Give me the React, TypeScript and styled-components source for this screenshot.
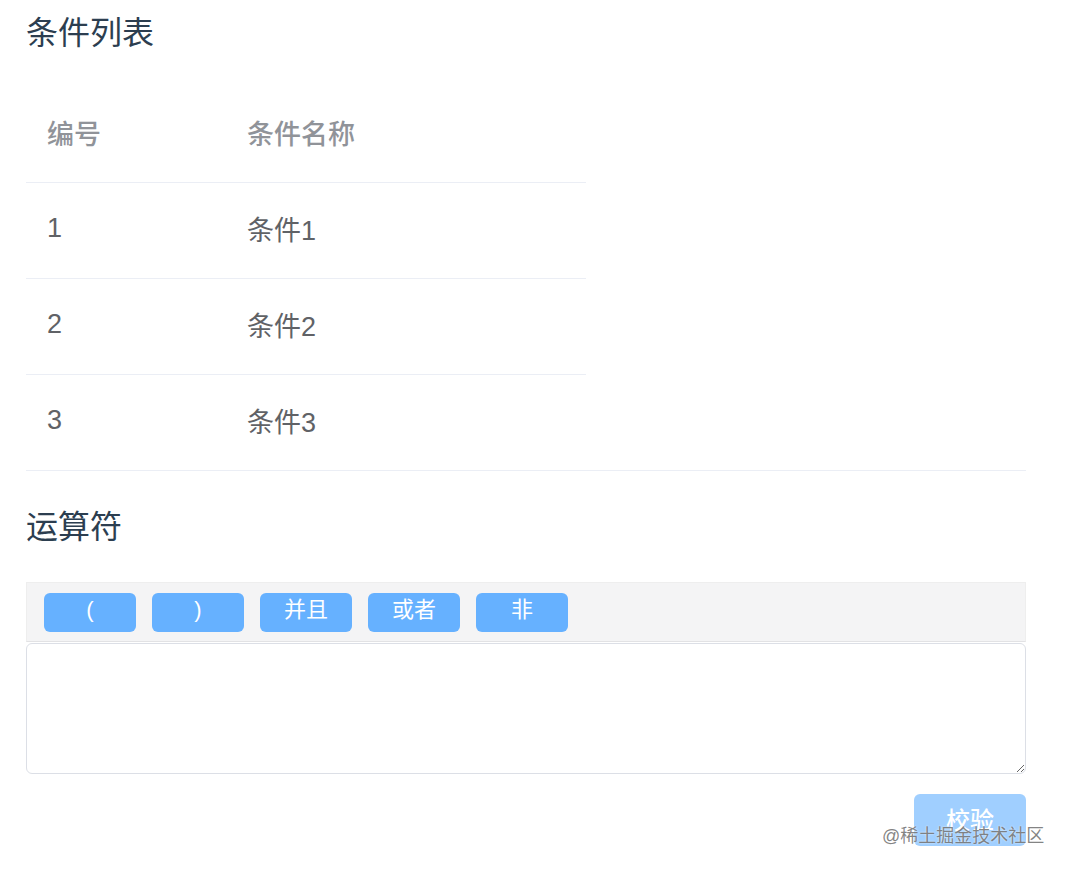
import React from "react";
import styled, { createGlobalStyle } from "styled-components";

const GlobalStyle = createGlobalStyle`
  html, body {
    margin: 0;
    padding: 0;
    background: #ffffff;
  }
  body {
    font-family: "Liberation Sans", "Noto Sans CJK SC", sans-serif;
    color: #2c3e50;
  }
`;

const Page = styled.div`
  position: relative;
  width: 1000px;
  padding: 13px 0 0 26px;
  min-height: 857px;
`;

const SectionTitle = styled.h3`
  margin: 0;
  font-size: 32px;
  line-height: 40px;
  font-weight: 400;
  color: #2c3e50;
`;

const TableWrap = styled.div`
  margin-top: 33px;
  width: 1000px;
  border-bottom: 1px solid #ebeef5;
`;

const Table = styled.table`
  border-collapse: collapse;
  table-layout: fixed;
  width: 560px;
`;

const HeadCell = styled.th<{ w: number }>`
  box-sizing: border-box;
  width: ${(p) => p.w}px;
  height: 96px;
  padding: 0 0 2px 21px;
  text-align: left;
  font-size: 27px;
  font-weight: 500;
  color: #909399;
  border-bottom: 1px solid #ebeef5;
`;

const BodyCell = styled.td<{ last?: boolean }>`
  box-sizing: border-box;
  height: 96px;
  padding: 0 0 3px 21px;
  font-size: 27px;
  color: #606266;
  border-bottom: ${(p) => (p.last ? "none" : "1px solid #ebeef5")};
`;

const OperatorSection = styled.div`
  margin-top: 36px;
`;

const Toolbar = styled.div`
  margin-top: 35px;
  display: flex;
  align-items: center;
  gap: 16px;
  box-sizing: border-box;
  height: 60px;
  padding: 1px 17px 0;
  background: #f4f4f5;
  border: 1px solid #eeeeee;
  border-bottom: 1px solid #e2e2e4;
`;

const OpButton = styled.button`
  width: 92px;
  height: 39px;
  border: none;
  border-radius: 6px;
  background: #66b1ff;
  color: #ffffff;
  font-family: "Liberation Sans", "Noto Sans CJK SC", sans-serif;
  font-size: 22px;
  line-height: 22px;
  padding: 0 0 5px;
  cursor: pointer;
`;

const Expression = styled.textarea`
  display: block;
  margin-top: 1px;
  width: 1000px;
  height: 131px;
  box-sizing: border-box;
  border: 1px solid #dcdfe6;
  border-radius: 6px;
  padding: 8px 14px;
  font-family: "Liberation Sans", "Noto Sans CJK SC", sans-serif;
  font-size: 22px;
  color: #606266;
  outline: none;
  resize: vertical;
`;

const Footer = styled.div`
  display: flex;
  justify-content: flex-end;
  margin-top: 20px;
`;

const CheckButton = styled.button`
  width: 112px;
  height: 52px;
  border: none;
  border-radius: 6px;
  background: #a0cfff;
  color: #ffffff;
  font-family: "Liberation Sans", "Noto Sans CJK SC", sans-serif;
  font-size: 24px;
  font-weight: 500;
  padding: 0 0 4px;
  cursor: not-allowed;
`;

const Watermark = styled.div`
  position: absolute;
  left: 882px;
  top: 822px;
  font-family: "Liberation Sans", "Noto Sans CJK SC", sans-serif;
  font-size: 18px;
  line-height: 28px;
  color: rgba(110, 110, 110, 0.85);
  text-shadow: 0 0 2px rgba(255, 255, 255, 0.9);
  white-space: nowrap;
`;

const conditions = [
  { id: 1, name: "条件1" },
  { id: 2, name: "条件2" },
  { id: 3, name: "条件3" },
];

const operators = ["(", ")", "并且", "或者", "非"];

export default function App() {
  return (
    <Page>
      <GlobalStyle />
      <SectionTitle>条件列表</SectionTitle>
      <TableWrap>
        <Table>
          <thead>
            <tr>
              <HeadCell w={200}>编号</HeadCell>
              <HeadCell w={360}>条件名称</HeadCell>
            </tr>
          </thead>
          <tbody>
            {conditions.map((c, i) => (
              <tr key={c.id}>
                <BodyCell last={i === conditions.length - 1}>{c.id}</BodyCell>
                <BodyCell last={i === conditions.length - 1}>{c.name}</BodyCell>
              </tr>
            ))}
          </tbody>
        </Table>
      </TableWrap>
      <OperatorSection>
        <SectionTitle>运算符</SectionTitle>
        <Toolbar>
          {operators.map((op) => (
            <OpButton key={op}>{op}</OpButton>
          ))}
        </Toolbar>
        <Expression />
        <Footer>
          <CheckButton disabled>校验</CheckButton>
        </Footer>
      </OperatorSection>
      <Watermark>@稀土掘金技术社区</Watermark>
    </Page>
  );
}
